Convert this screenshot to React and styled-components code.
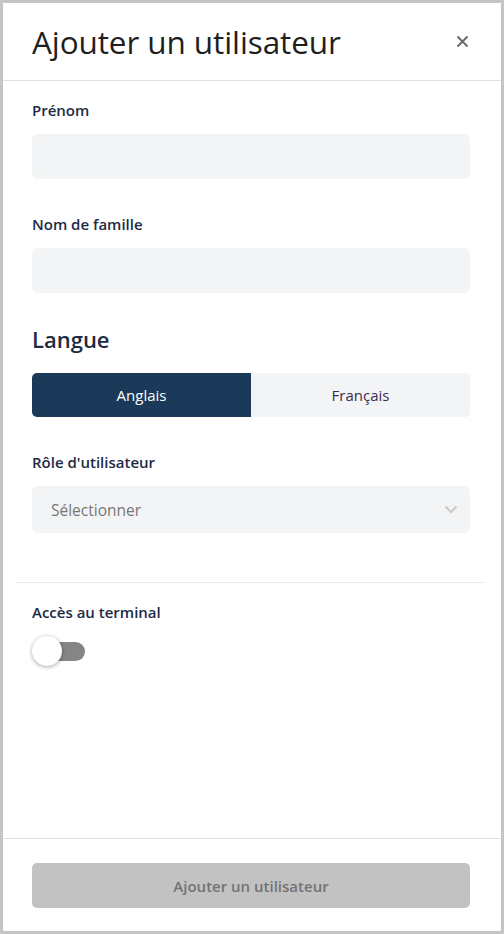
import React, { useState } from 'react';
import styled, { createGlobalStyle } from 'styled-components';

const GlobalStyle = createGlobalStyle`
  html, body {
    margin: 0;
    padding: 0;
    height: 100%;
    background: #c4c4c4;
    font-family: "Open Sans", "Noto Sans", Arial, sans-serif;
  }
  #root {
    height: 100%;
  }
  * {
    box-sizing: border-box;
  }
`;

const Panel = styled.div`
  margin: 3px;
  height: calc(100% - 6px);
  background: #fff;
  display: flex;
  flex-direction: column;
`;

const Header = styled.div`
  height: 78px;
  flex-shrink: 0;
  display: flex;
  align-items: center;
  justify-content: space-between;
  padding: 0 32px 0 29px;
  border-bottom: 1px solid #dde0e5;
`;

const Title = styled.h1`
  margin: 0;
  font-size: 31.5px;
  font-weight: 500;
  color: #1f1f1f;
  letter-spacing: -0.1px;
`;

const Close = styled.button`
  border: none;
  background: none;
  padding: 0;
  width: 14px;
  height: 14px;
  display: flex;
  align-items: center;
  justify-content: center;
  cursor: pointer;
`;

const Body = styled.div`
  flex: 1;
  padding: 18px 31px 0 29px;
  display: flex;
  flex-direction: column;
`;

const Label = styled.div`
  font-size: 15px;
  line-height: 22px;
  font-weight: 600;
  color: #1e2b45;
  margin-top: ${(p) => p.$top || 0}px;
`;

const Input = styled.input`
  margin-top: 13px;
  height: 45px;
  width: 100%;
  border: none;
  border-radius: 6px;
  background: #f3f4f6;
  padding: 0 18px;
  font-family: inherit;
  font-size: 16px;
  outline: none;
`;

const Heading = styled.h2`
  margin: 31px 0 0;
  font-size: 22px;
  line-height: 30px;
  font-weight: 600;
  color: #1e2b45;
`;

const Segment = styled.div`
  margin-top: 19px;
  display: grid;
  grid-template-columns: 1fr 1fr;
  height: 44px;
  border-radius: 5px;
  overflow: hidden;
  background: #f3f4f6;
`;

const SegButton = styled.button`
  border: none;
  font-family: inherit;
  font-size: 15px;
  cursor: pointer;
  background: ${(p) => (p.$active ? '#1b3a59' : '#f3f4f6')};
  color: ${(p) => (p.$active ? '#ffffff' : '#3a2c4c')};
`;

const Select = styled.div`
  margin-top: 13px;
  height: 47px;
  border-radius: 6px;
  background: #f3f4f6;
  display: flex;
  align-items: center;
  justify-content: space-between;
  padding: 0 12px 0 19px;
  font-size: 15.5px;
  color: #777;
`;

const Divider = styled.hr`
  margin: 49px -15px 0;
  border: none;
  border-top: 1px solid #e9e9ec;
`;

const Switch = styled.button`
  margin-top: 13px;
  position: relative;
  width: 56px;
  height: 30px;
  border: none;
  background: none;
  padding: 0;
  cursor: pointer;
`;

const Track = styled.span`
  position: absolute;
  left: 6px;
  top: 6px;
  width: 47px;
  height: 19px;
  border-radius: 10px;
  background: ${(p) => (p.$on ? '#1b3a59' : '#858585')};
`;

const Knob = styled.span`
  position: absolute;
  top: 0;
  left: ${(p) => (p.$on ? '24px' : '0')};
  width: 30px;
  height: 30px;
  border-radius: 50%;
  background: #fff;
  box-shadow: 0 1px 4px rgba(0, 0, 0, 0.35);
  transition: left 0.2s;
`;

const Footer = styled.div`
  flex-shrink: 0;
  border-top: 1px solid #dedde4;
  padding: 24px 31px 23px 29px;
`;

const Submit = styled.button`
  width: 100%;
  height: 45px;
  border: none;
  border-radius: 5px;
  background: #c2c2c2;
  color: #737373;
  font-family: inherit;
  font-size: 15px;
  font-weight: 600;
`;

export default function App() {
  const [lang, setLang] = useState('en');
  const [terminal, setTerminal] = useState(false);

  return (
    <>
      <GlobalStyle />
      <Panel>
        <Header>
          <Title>Ajouter un utilisateur</Title>
          <Close aria-label="Fermer">
            <svg width="13" height="13" viewBox="0 0 13 13">
              <path d="M1.5 1.5 L11.5 11.5 M11.5 1.5 L1.5 11.5" stroke="#6b6b6b" strokeWidth="2" />
            </svg>
          </Close>
        </Header>
        <Body>
          <Label>Prénom</Label>
          <Input />
          <Label $top={34}>Nom de famille</Label>
          <Input />
          <Heading>Langue</Heading>
          <Segment>
            <SegButton $active={lang === 'en'} onClick={() => setLang('en')}>
              Anglais
            </SegButton>
            <SegButton $active={lang === 'fr'} onClick={() => setLang('fr')}>
              Français
            </SegButton>
          </Segment>
          <Label $top={34}>Rôle d'utilisateur</Label>
          <Select>
            <span>Sélectionner</span>
            <svg width="14" height="9" viewBox="0 0 14 9">
              <path d="M1.5 1.5 L7 7 L12.5 1.5" fill="none" stroke="#c9c9c9" strokeWidth="2" />
            </svg>
          </Select>
          <Divider />
          <Label $top={18}>Accès au terminal</Label>
          <Switch onClick={() => setTerminal(!terminal)}>
            <Track $on={terminal} />
            <Knob $on={terminal} />
          </Switch>
        </Body>
        <Footer>
          <Submit disabled>Ajouter un utilisateur</Submit>
        </Footer>
      </Panel>
    </>
  );
}
